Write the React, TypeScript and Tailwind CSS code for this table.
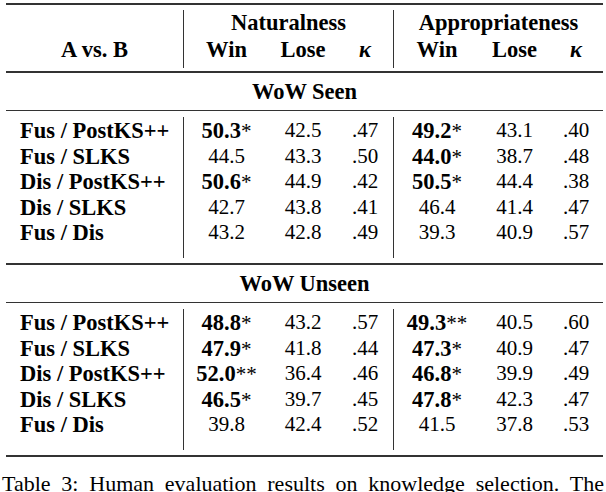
type Cell = { v: string; star?: string };
type Row = { label: string; nat: Cell[]; app: Cell[] };

const seen: Row[] = [
  {
    label: "Fus / PostKS++",
    nat: [{ v: "50.3", star: "*" }, { v: "42.5" }, { v: ".47" }],
    app: [{ v: "49.2", star: "*" }, { v: "43.1" }, { v: ".40" }],
  },
  {
    label: "Fus / SLKS",
    nat: [{ v: "44.5" }, { v: "43.3" }, { v: ".50" }],
    app: [{ v: "44.0", star: "*" }, { v: "38.7" }, { v: ".48" }],
  },
  {
    label: "Dis / PostKS++",
    nat: [{ v: "50.6", star: "*" }, { v: "44.9" }, { v: ".42" }],
    app: [{ v: "50.5", star: "*" }, { v: "44.4" }, { v: ".38" }],
  },
  {
    label: "Dis / SLKS",
    nat: [{ v: "42.7" }, { v: "43.8" }, { v: ".41" }],
    app: [{ v: "46.4" }, { v: "41.4" }, { v: ".47" }],
  },
  {
    label: "Fus / Dis",
    nat: [{ v: "43.2" }, { v: "42.8" }, { v: ".49" }],
    app: [{ v: "39.3" }, { v: "40.9" }, { v: ".57" }],
  },
];

const unseen: Row[] = [
  {
    label: "Fus / PostKS++",
    nat: [{ v: "48.8", star: "*" }, { v: "43.2" }, { v: ".57" }],
    app: [{ v: "49.3", star: "**" }, { v: "40.5" }, { v: ".60" }],
  },
  {
    label: "Fus / SLKS",
    nat: [{ v: "47.9", star: "*" }, { v: "41.8" }, { v: ".44" }],
    app: [{ v: "47.3", star: "*" }, { v: "40.9" }, { v: ".47" }],
  },
  {
    label: "Dis / PostKS++",
    nat: [{ v: "52.0", star: "**" }, { v: "36.4" }, { v: ".46" }],
    app: [{ v: "46.8", star: "*" }, { v: "39.9" }, { v: ".49" }],
  },
  {
    label: "Dis / SLKS",
    nat: [{ v: "46.5", star: "*" }, { v: "39.7" }, { v: ".45" }],
    app: [{ v: "47.8", star: "*" }, { v: "42.3" }, { v: ".47" }],
  },
  {
    label: "Fus / Dis",
    nat: [{ v: "39.8" }, { v: "42.4" }, { v: ".52" }],
    app: [{ v: "41.5" }, { v: "37.8" }, { v: ".53" }],
  },
];

const Value = ({ c }: { c: Cell }) =>
  c.star ? (
    <span>
      <b className="text-[22.5px]">{c.v}</b>
      {c.star}
    </span>
  ) : (
    <span>{c.v}</span>
  );

const NatCols = ({ cells }: { cells: Cell[] }) => (
  <div className="grid grid-cols-[85px_68px_56px] h-[25.5px] leading-[25.5px] text-center">
    {cells.map((c, i) => (
      <Value key={i} c={c} />
    ))}
  </div>
);

const AppCols = ({ cells }: { cells: Cell[] }) => (
  <div className="grid grid-cols-[86px_69px_54px] h-[25.5px] leading-[25.5px] text-center">
    {cells.map((c, i) => (
      <Value key={i} c={c} />
    ))}
  </div>
);

const Section = ({ title, rows }: { title: string; rows: Row[] }) => (
  <>
    <div className="h-[37px] flex items-center justify-center font-bold text-[22.5px]">{title}</div>
    <div className="h-px bg-[#333]" />
    <div className="flex">
      <div className="w-[177px] pt-[7px] pb-[17.5px] pl-[14px] font-bold text-[22.5px]">
        {rows.map((r) => (
          <div key={r.label} className="h-[25.5px] leading-[25.5px]">
            {r.label}
          </div>
        ))}
      </div>
      <div className="w-px bg-[#333] mt-[6px] mb-[5px]" />
      <div className="w-[209px] pt-[7px]">
        {rows.map((r) => (
          <NatCols key={r.label} cells={r.nat} />
        ))}
      </div>
      <div className="w-px bg-[#333] mt-[6px] mb-[5px]" />
      <div className="w-[209px] pt-[7px]">
        {rows.map((r) => (
          <AppCols key={r.label} cells={r.app} />
        ))}
      </div>
    </div>
  </>
);

const Kappa = () => <i className="font-bold">κ</i>;

export default function App() {
  return (
    <div className="w-[606px] h-[492px] overflow-hidden bg-white text-black font-['Liberation_Serif'] text-[21px]">
      <div className="ml-[6px] w-[597px] pt-[3px]">
        <div className="h-[2px] bg-[#333]" />

        {/* Header */}
        <div className="flex font-bold text-[22.5px]">
          <div className="w-[177px] pt-[32px] pb-[8px] text-center">
            <div className="h-[26px] leading-[26px]">A vs. B</div>
          </div>
          <div className="w-px bg-[#333] mt-[5px] mb-[3px]" />
          <div className="w-[209px] pb-[8px]">
            <div className="h-[32px] pt-[4px] leading-[28px] text-center">Naturalness</div>
            <div className="grid grid-cols-[85px_68px_56px] h-[26px] leading-[26px] text-center">
              <span>Win</span>
              <span>Lose</span>
              <Kappa />
            </div>
          </div>
          <div className="w-px bg-[#333] mt-[5px] mb-[3px]" />
          <div className="w-[209px] pb-[8px]">
            <div className="h-[32px] pt-[4px] leading-[28px] text-center">Appropriateness</div>
            <div className="grid grid-cols-[86px_69px_54px] h-[26px] leading-[26px] text-center">
              <span>Win</span>
              <span>Lose</span>
              <Kappa />
            </div>
          </div>
        </div>
        <div className="h-[2px] bg-[#333]" />

        <Section title="WoW Seen" rows={seen} />
        <div className="h-[2px] bg-[#333]" />
        <Section title="WoW Unseen" rows={unseen} />
        <div className="h-[2px] bg-[#333]" />
      </div>

      <p className="ml-[2px] w-[602px] mt-[14px] text-[22px] leading-[26px] text-justify">
        Table 3: Human evaluation results on knowledge selection. The
        symbols * and ** indicate that the difference is statistically
        significant at the given levels.
      </p>
    </div>
  );
}
